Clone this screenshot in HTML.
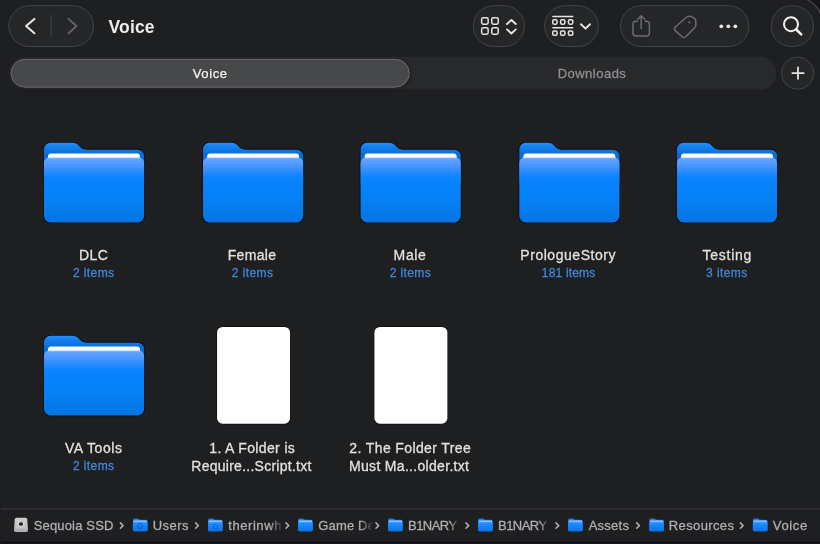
<!DOCTYPE html>
<html lang="en">
<head>
<meta charset="utf-8">
<title>Voice</title>
<style>
  html, body { margin: 0; padding: 0; }
  body {
    width: 820px; height: 544px; overflow: hidden; position: relative;
    background: #1e1f21;
    font-family: "Liberation Sans", sans-serif;
    color: #e6e6e6;
  }
  .win { position: absolute; left: 0; top: 0; width: 820px; height: 544px; background: #1e1f21; overflow: hidden; }
  #gfx { position: absolute; left: 0; top: 0; }
  #txt { position: absolute; left: 0; top: 0; width: 820px; height: 544px; will-change: transform; }
  .t { position: absolute; white-space: nowrap; }
</style>
</head>
<body>
<div class="win">
<svg id="gfx" width="820" height="544" viewBox="0 0 820 544" fill="none">
  <defs>
    <linearGradient id="gBack" x1="0" y1="0" x2="0" y2="1">
      <stop offset="0" stop-color="#2a8ffa"/>
      <stop offset="0.1" stop-color="#1480f0"/>
      <stop offset="0.3" stop-color="#086cd6"/>
      <stop offset="1" stop-color="#086cd6"/>
    </linearGradient>
    <linearGradient id="gFront" x1="0" y1="0" x2="0" y2="1">
      <stop offset="0" stop-color="#8dbfff"/>
      <stop offset="0.03" stop-color="#62a3ff"/>
      <stop offset="0.12" stop-color="#4b97ff"/>
      <stop offset="0.22" stop-color="#2a8bff"/>
      <stop offset="0.3" stop-color="#0a84ff"/>
      <stop offset="0.65" stop-color="#0580f6"/>
      <stop offset="1" stop-color="#0674e0"/>
    </linearGradient>
    <linearGradient id="gPaper" x1="0" y1="0" x2="0" y2="1">
      <stop offset="0" stop-color="#ffffff"/>
      <stop offset="0.7" stop-color="#ffffff"/>
      <stop offset="1" stop-color="#cfe3ff"/>
    </linearGradient>
    <linearGradient id="gPf" x1="0" y1="0" x2="0" y2="1">
      <stop offset="0" stop-color="#4a9cff"/>
      <stop offset="0.25" stop-color="#1f8bff"/>
      <stop offset="1" stop-color="#0a72e6"/>
    </linearGradient>
    <linearGradient id="gDisk" x1="0" y1="0" x2="0" y2="1">
      <stop offset="0" stop-color="#cdcdcd"/>
      <stop offset="1" stop-color="#bdbdbf"/>
    </linearGradient>
    <filter id="soft" x="-10%" y="-50%" width="120%" height="200%"><feGaussianBlur stdDeviation="1.6"/></filter>
    <g id="pfolder">
      <path d="M0 1.600 Q0 0 1.600 0 H4.600 Q5.400 0 5.900 0.600 Q6.400 1.200 7.200 1.200 H13 Q14.600 1.200 14.600 2.800 V11.200 Q14.600 12.800 13 12.800 H1.600 Q0 12.800 0 11.200 Z" fill="#167ef0"/>
      <path d="M0.800 2.200 H13.800 V4 H0.800 Z" fill="#d6eaff"/>
      <path d="M0 4.500 Q0 3 1.500 3 H13.100 Q14.600 3 14.600 4.500 V11.200 Q14.600 12.800 13 12.800 H1.600 Q0 12.800 0 11.200 Z" fill="url(#gPf)"/>
    </g>
    <g id="folder">
      <path d="M-0.90 6.50 A7.40 7.40 0 0 1 6.50 -0.90 H28.57 Q32.66 -0.90 35.65 2.76 Q38.45 5.95 42.96 5.95 H93.65 A7.40 7.40 0 0 1 101.05 13.35 V40.00 H-0.90 Z M-0.90 21.20 A7.4 7.4 0 0 1 6.50 13.80 H93.65 A7.4 7.4 0 0 1 101.05 21.20 V73.10 A7.4 7.4 0 0 1 93.65 80.50 H6.50 A7.4 7.4 0 0 1 -0.90 73.10 Z" fill="#0c0c0e"/>
      <path d="M0.00 6.50 A6.50 6.50 0 0 1 6.50 0.00 H28.30 Q32.30 0.00 35.20 3.30 Q38.00 6.85 42.60 6.85 H93.65 A6.50 6.50 0 0 1 100.15 13.35 V40.00 H0.00 Z" fill="url(#gBack)"/>
      <path d="M4.100 13.650 A3 3 0 0 1 7.100 10.650 H93 A3 3 0 0 1 96 13.650 V24 H4.100 Z" fill="#ffffff"/>
      <path d="M0.00 20.20 A5.5 5.5 0 0 1 5.50 14.70 H94.65 A5.5 5.5 0 0 1 100.15 20.20 V73.10 A6.5 6.5 0 0 1 93.65 79.60 H6.50 A6.5 6.5 0 0 1 0.00 73.10 Z" fill="url(#gFront)"/>
    </g>
  </defs>

  <!-- window corner (top right) -->
  <path d="M796.500 -2.500 A26 26 0 0 1 822.500 23.500 V-3 Z" fill="#161618"/>
  <path d="M796.500 -2.500 A26 26 0 0 1 822.500 23.500" stroke="#454648" stroke-width="1.200"/>

  <!-- toolbar pills -->
  <rect x="8.80" y="5.70" width="84.70" height="40.80" rx="20.40" fill="#252628" stroke="#434446" stroke-width="1.0"/>
  <rect x="473.40" y="5.70" width="51.10" height="40.80" rx="20.40" fill="#252628" stroke="#434446" stroke-width="1.0"/>
  <rect x="544.60" y="5.70" width="53.80" height="40.80" rx="20.40" fill="#252628" stroke="#434446" stroke-width="1.0"/>
  <rect x="620.50" y="5.70" width="128.40" height="40.80" rx="20.40" fill="#252628" stroke="#434446" stroke-width="1.0"/>
  <rect x="771.10" y="5.70" width="42.40" height="40.80" rx="20.40" fill="#252628" stroke="#434446" stroke-width="1.0"/>

  <g stroke-linecap="round" stroke-linejoin="round">
    <!-- back / forward -->
    <path d="M34.400 18.900 L26.100 26.100 L34.400 33.300" stroke="#e8e8e8" stroke-width="2"/>
    <path d="M51 15 V37.500" stroke="#404143" stroke-width="1"/>
    <path d="M68.600 18.900 L76.500 26.100 L68.600 33.300" stroke="#606163" stroke-width="2"/>
    <!-- icon grid 2x2 -->
    <g stroke="#e6e6e6" stroke-width="1.500">
      <rect x="481.650" y="17.650" width="6.500" height="6.500" rx="1.700"/>
      <rect x="491.750" y="17.650" width="6.500" height="6.500" rx="1.700"/>
      <rect x="481.650" y="27.750" width="6.500" height="6.500" rx="1.700"/>
      <rect x="491.750" y="27.750" width="6.500" height="6.500" rx="1.700"/>
    </g>
    <path d="M507 24 L511.400 20 L515.800 24 M507 29.400 L511.400 33.500 L515.800 29.400" stroke="#e6e6e6" stroke-width="1.900"/>
    <!-- group icon -->
    <g stroke="#e6e6e6" stroke-width="1.500">
      <path d="M552.900 16.500 H572.700 M552.900 27.650 H572.700"/>
      <rect x="552.750" y="19.750" width="4.300" height="4.400" rx="1.300"/>
      <rect x="560.600" y="19.750" width="4.300" height="4.400" rx="1.300"/>
      <rect x="568.450" y="19.750" width="4.300" height="4.400" rx="1.300"/>
      <rect x="552.750" y="31" width="4.300" height="4.300" rx="1.300"/>
      <rect x="560.600" y="31" width="4.300" height="4.300" rx="1.300"/>
      <rect x="568.450" y="31" width="4.300" height="4.300" rx="1.300"/>
    </g>
    <path d="M581 24.200 L585.500 28.600 L590 24.200" stroke="#e6e6e6" stroke-width="1.900"/>
    <!-- share -->
    <g stroke="#6b6c6e" stroke-width="1.500">
      <path d="M637.400 21.200 H636 Q633 21.200 633 24.200 V33 Q633 36 636 36 H646.400 Q649.400 36 649.400 33 V24.200 Q649.400 21.200 646.400 21.200 H645"/>
      <path d="M641.200 28.600 V16 M637.700 19.200 L641.200 15.700 L644.700 19.200"/>
    </g>
    <!-- tag -->
    <g stroke="#6b6c6e" stroke-width="1.500">
      <path d="M675.200 27 L686.800 17 Q689 15.500 691.600 16.600 L694.400 18.400 Q695.800 19.500 695.800 21.500 V25 Q695.800 26.600 694.700 27.700 L685.600 36.700 Q683.900 38.200 682.200 36.700 L675.200 30.600 Q673.400 28.800 675.200 27 Z"/>
      <circle cx="689.300" cy="22.300" r="1.100" fill="#6b6c6e" stroke="none"/>
    </g>
    <!-- more -->
    <g fill="#e6e6e6">
      <circle cx="721.300" cy="26.300" r="1.900"/><circle cx="728.300" cy="26.300" r="1.900"/><circle cx="735.300" cy="26.300" r="1.900"/>
    </g>
    <!-- search -->
    <circle cx="791" cy="24.200" r="7" stroke="#f2f2f2" stroke-width="2"/>
    <path d="M796.300 29.500 L801.200 34.400" stroke="#f2f2f2" stroke-width="2.500"/>
  </g>

  <!-- tab bar -->
  <rect x="8.600" y="56.800" width="767.700" height="33" rx="16.500" fill="#28292b"/>
  <rect x="11" y="59.800" width="399.800" height="28.500" rx="14.250" fill="#121315" opacity="0.55" filter="url(#soft)"/>
  <rect x="10.100" y="58.400" width="400.100" height="29.700" rx="14.850" fill="#1b1c1e" opacity="0.4"/>
  <rect x="11" y="59.300" width="398.300" height="27.900" rx="13.950" fill="#47484a" stroke="#6a6b6d" stroke-width="1"/>
  <circle cx="797.650" cy="73.150" r="16.150" fill="#252628" stroke="#434446" stroke-width="1"/>
  <path d="M792.300 73.100 H803.700 M798 67.400 V78.800" stroke="#e4e4e4" stroke-width="1.800" stroke-linecap="round"/>

  <!-- icons row 1 -->
  <use href="#folder" transform="translate(43.95 142.80)"/>
  <use href="#folder" transform="translate(203.00 142.80)"/>
  <use href="#folder" transform="translate(360.60 142.80)"/>
  <use href="#folder" transform="translate(519.30 142.80)"/>
  <use href="#folder" transform="translate(676.95 142.80)"/>
  <!-- icons row 2 -->
  <use href="#folder" transform="translate(43.95 335.80)"/>
  <rect x="216.400" y="326.200" width="74.300" height="98.200" rx="6.200" fill="#0f0f11"/>
  <rect x="217.050" y="326.900" width="73" height="96.800" rx="5.500" fill="#ffffff"/>
  <rect x="373.750" y="326.200" width="74.300" height="98.200" rx="6.200" fill="#0f0f11"/>
  <rect x="374.400" y="326.900" width="73" height="96.800" rx="5.500" fill="#ffffff"/>

  <!-- path bar -->
  <rect x="0" y="508.300" width="820" height="1.200" fill="#353638"/>
  <rect x="0" y="540.800" width="820" height="1.200" fill="#191a1c"/>
  <rect x="0" y="541.900" width="820" height="1.200" fill="#0f0f11"/>
  <rect x="0" y="543.100" width="820" height="1" fill="#17181a"/>
  <rect x="0" y="0" width="1" height="544" fill="#1c1d1f"/>
  <g>
    <g transform="translate(14.100 517.800)">
      <path d="M0.600 1.600 Q0.700 0 2.300 0 H11.500 Q13.100 0 13.200 1.600 L13.800 12 Q13.900 14.100 11.900 14.100 H1.900 Q-0.100 14.100 0 12 Z" fill="url(#gDisk)"/>
      <path d="M0.080 10.900 H13.730 L13.800 12 Q13.900 14.100 11.900 14.100 H1.900 Q-0.100 14.100 0 12 Z" fill="#b1b1b3"/>
      <circle cx="6.800" cy="6.100" r="3.300" fill="#d6d6d6" opacity="0.7"/>
      <path d="M5.300 4.900 Q6.300 4.300 7.300 4.800 Q8.300 4.300 9 5.200 Q8.200 6 8.900 7 Q8.300 8 7.500 7.900 Q6.800 7.700 6.100 7.900 Q5 7.700 4.800 6.400 Q4.700 5.400 5.300 4.900 Z M7 4.500 Q7.100 3.700 7.900 3.500 Q7.900 4.300 7 4.500 Z" fill="#252527"/>
    </g>
    <path d="M120.40 522.9 L123.10 525.6 L120.40 528.3" fill="none" stroke="#b0b0b2" stroke-width="1.5" stroke-linecap="round" stroke-linejoin="round"/>
    <path d="M195.60 522.9 L198.30 525.6 L195.60 528.3" fill="none" stroke="#b0b0b2" stroke-width="1.5" stroke-linecap="round" stroke-linejoin="round"/>
    <path d="M286.00 522.9 L288.70 525.6 L286.00 528.3" fill="none" stroke="#b0b0b2" stroke-width="1.5" stroke-linecap="round" stroke-linejoin="round"/>
    <path d="M376.00 522.9 L378.70 525.6 L376.00 528.3" fill="none" stroke="#b0b0b2" stroke-width="1.5" stroke-linecap="round" stroke-linejoin="round"/>
    <path d="M466.00 522.9 L468.70 525.6 L466.00 528.3" fill="none" stroke="#b0b0b2" stroke-width="1.5" stroke-linecap="round" stroke-linejoin="round"/>
    <path d="M556.00 522.9 L558.70 525.6 L556.00 528.3" fill="none" stroke="#b0b0b2" stroke-width="1.5" stroke-linecap="round" stroke-linejoin="round"/>
    <path d="M636.70 522.9 L639.40 525.6 L636.70 528.3" fill="none" stroke="#b0b0b2" stroke-width="1.5" stroke-linecap="round" stroke-linejoin="round"/>
    <path d="M740.40 522.9 L743.10 525.6 L740.40 528.3" fill="none" stroke="#b0b0b2" stroke-width="1.5" stroke-linecap="round" stroke-linejoin="round"/>
    <g transform="translate(132.90 518.45)"><use href="#pfolder"/><circle cx="7.3" cy="7.7" r="2.7" fill="none" stroke="#0b5fc4" stroke-width="0.9"/><path d="M6.3 7.2 V7.9 M8.3 7.2 V7.9 M6.2 8.8 Q7.3 9.6 8.4 8.8" fill="none" stroke="#0b5fc4" stroke-width="0.6"/></g>
    <g transform="translate(208.00 518.45)"><use href="#pfolder"/><path d="M4.7 8 L7.3 5.600 L9.900 8 M5.400 7.700 V10.300 H9.200 V7.700" fill="none" stroke="#0b5fc4" stroke-width="0.9" stroke-linejoin="round"/></g>
    <g transform="translate(298.10 518.45)"><use href="#pfolder"/></g>
    <g transform="translate(388.10 518.45)"><use href="#pfolder"/></g>
    <g transform="translate(478.10 518.45)"><use href="#pfolder"/></g>
    <g transform="translate(568.10 518.45)"><use href="#pfolder"/></g>
    <g transform="translate(649.30 518.45)"><use href="#pfolder"/></g>
    <g transform="translate(752.90 518.45)"><use href="#pfolder"/></g>
  </g>
</svg>

  <div id="txt">
  <!--TEXT-START-->
  <div class="t" id="title" style="left:108.61px;top:16.36px;font-size:17.5px;line-height:22.75px;color:#ececec;letter-spacing:0.133px;font-weight:bold;">Voice</div>
  <div class="t" id="tab1" style="left:192.81px;top:65.90px;font-size:13px;line-height:16.9px;color:#f2f2f2;letter-spacing:0.617px;-webkit-text-stroke:0.25px #f2f2f2;">Voice</div>
  <div class="t" id="tab2" style="left:557.63px;top:65.90px;font-size:13px;line-height:16.9px;color:#8f8f91;letter-spacing:0.490px;-webkit-text-stroke:0.28px #8f8f91;">Downloads</div>
  <div class="t" id="n1" style="left:79.04px;top:246.35px;font-size:14px;line-height:18.2px;color:#e2e2e2;letter-spacing:0.461px;-webkit-text-stroke:0.28px #e2e2e2;">DLC</div>
  <div class="t" id="s1" style="left:72.92px;top:265.64px;font-size:12px;line-height:15.6px;color:#3f87dc;letter-spacing:0.411px;-webkit-text-stroke:0.28px #3f87dc;">2 items</div>
  <div class="t" id="n2" style="left:227.65px;top:246.35px;font-size:14px;line-height:18.2px;color:#e2e2e2;letter-spacing:0.359px;-webkit-text-stroke:0.28px #e2e2e2;">Female</div>
  <div class="t" id="s2" style="left:231.80px;top:265.64px;font-size:12px;line-height:15.6px;color:#3f87dc;letter-spacing:0.415px;-webkit-text-stroke:0.28px #3f87dc;">2 items</div>
  <div class="t" id="n3" style="left:393.60px;top:246.35px;font-size:14px;line-height:18.2px;color:#e2e2e2;letter-spacing:0.647px;-webkit-text-stroke:0.28px #e2e2e2;">Male</div>
  <div class="t" id="s3" style="left:389.67px;top:265.64px;font-size:12px;line-height:15.6px;color:#3f87dc;letter-spacing:0.396px;-webkit-text-stroke:0.28px #3f87dc;">2 items</div>
  <div class="t" id="n4" style="left:520.33px;top:246.35px;font-size:14px;line-height:18.2px;color:#e2e2e2;letter-spacing:0.532px;-webkit-text-stroke:0.28px #e2e2e2;">PrologueStory</div>
  <div class="t" id="s4" style="left:541.78px;top:265.64px;font-size:12px;line-height:15.6px;color:#3f87dc;letter-spacing:0.190px;-webkit-text-stroke:0.28px #3f87dc;">181 items</div>
  <div class="t" id="n5" style="left:702.52px;top:246.35px;font-size:14px;line-height:18.2px;color:#e2e2e2;letter-spacing:0.739px;-webkit-text-stroke:0.28px #e2e2e2;">Testing</div>
  <div class="t" id="s5" style="left:706.02px;top:265.64px;font-size:12px;line-height:15.6px;color:#3f87dc;letter-spacing:0.429px;-webkit-text-stroke:0.28px #3f87dc;">3 items</div>
  <div class="t" id="n6" style="left:64.92px;top:439.25px;font-size:14px;line-height:18.2px;color:#e2e2e2;letter-spacing:0.549px;-webkit-text-stroke:0.28px #e2e2e2;">VA Tools</div>
  <div class="t" id="s6" style="left:72.92px;top:458.64px;font-size:12px;line-height:15.6px;color:#3f87dc;letter-spacing:0.411px;-webkit-text-stroke:0.28px #3f87dc;">2 items</div>
  <div class="t" id="n7a" style="left:209.26px;top:439.25px;font-size:14px;line-height:18.2px;color:#e2e2e2;letter-spacing:0.359px;-webkit-text-stroke:0.28px #e2e2e2;">1. A Folder is</div>
  <div class="t" id="n7b" style="left:191.33px;top:457.45px;font-size:14px;line-height:18.2px;color:#e2e2e2;letter-spacing:0.257px;-webkit-text-stroke:0.28px #e2e2e2;">Require...Script.txt</div>
  <div class="t" id="n8a" style="left:349.31px;top:439.25px;font-size:14px;line-height:18.2px;color:#e2e2e2;letter-spacing:0.387px;-webkit-text-stroke:0.28px #e2e2e2;">2. The Folder Tree</div>
  <div class="t" id="n8b" style="left:349.04px;top:457.45px;font-size:14px;line-height:18.2px;color:#e2e2e2;letter-spacing:0.311px;-webkit-text-stroke:0.28px #e2e2e2;">Must Ma...older.txt</div>
  <div class="t" id="p1" style="left:33.70px;top:517.75px;font-size:13px;line-height:16.9px;color:#b0b0b2;letter-spacing:0.161px;-webkit-text-stroke:0.28px #b0b0b2;">Sequoia SSD</div>
  <div class="t" id="p2" style="left:152.79px;top:517.75px;font-size:13px;line-height:16.9px;color:#b0b0b2;letter-spacing:0.434px;-webkit-text-stroke:0.28px #b0b0b2;">Users</div>
  <div class="t" id="p3" style="left:228.25px;top:517.75px;font-size:13px;line-height:16.9px;color:#b0b0b2;letter-spacing:0.567px;width:53.7px;overflow:hidden;-webkit-mask-image:linear-gradient(to right,#000 41.7px,rgba(0,0,0,0.15) 53.7px);mask-image:linear-gradient(to right,#000 41.7px,rgba(0,0,0,0.15) 53.7px);-webkit-text-stroke:0.28px #b0b0b2;">therinwh</div>
  <div class="t" id="p4" style="left:318.34px;top:517.75px;font-size:13px;line-height:16.9px;color:#b0b0b2;letter-spacing:0.150px;width:53.9px;overflow:hidden;-webkit-mask-image:linear-gradient(to right,#000 41.7px,rgba(0,0,0,0.15) 53.9px);mask-image:linear-gradient(to right,#000 41.7px,rgba(0,0,0,0.15) 53.9px);-webkit-text-stroke:0.28px #b0b0b2;">Game De</div>
  <div class="t" id="p5" style="left:408.00px;top:517.75px;font-size:13px;line-height:16.9px;color:#b0b0b2;letter-spacing:-0.544px;width:50.0px;overflow:hidden;-webkit-mask-image:linear-gradient(to right,#000 42.0px,rgba(0,0,0,0.15) 50.0px);mask-image:linear-gradient(to right,#000 42.0px,rgba(0,0,0,0.15) 50.0px);-webkit-text-stroke:0.28px #b0b0b2;">B1NARY</div>
  <div class="t" id="p6" style="left:498.00px;top:517.75px;font-size:13px;line-height:16.9px;color:#b0b0b2;letter-spacing:-0.544px;width:50.0px;overflow:hidden;-webkit-mask-image:linear-gradient(to right,#000 42.0px,rgba(0,0,0,0.15) 50.0px);mask-image:linear-gradient(to right,#000 42.0px,rgba(0,0,0,0.15) 50.0px);-webkit-text-stroke:0.28px #b0b0b2;">B1NARY</div>
  <div class="t" id="p7" style="left:588.64px;top:517.75px;font-size:13px;line-height:16.9px;color:#b0b0b2;letter-spacing:0.257px;-webkit-text-stroke:0.28px #b0b0b2;">Assets</div>
  <div class="t" id="p8" style="left:668.83px;top:517.75px;font-size:13px;line-height:16.9px;color:#b0b0b2;letter-spacing:0.373px;-webkit-text-stroke:0.28px #b0b0b2;">Resources</div>
  <div class="t" id="p9" style="left:772.87px;top:517.75px;font-size:13px;line-height:16.9px;color:#b0b0b2;letter-spacing:0.626px;-webkit-text-stroke:0.28px #b0b0b2;">Voice</div>
  <!--TEXT-END-->
  </div>
</div>
</body>
</html>
